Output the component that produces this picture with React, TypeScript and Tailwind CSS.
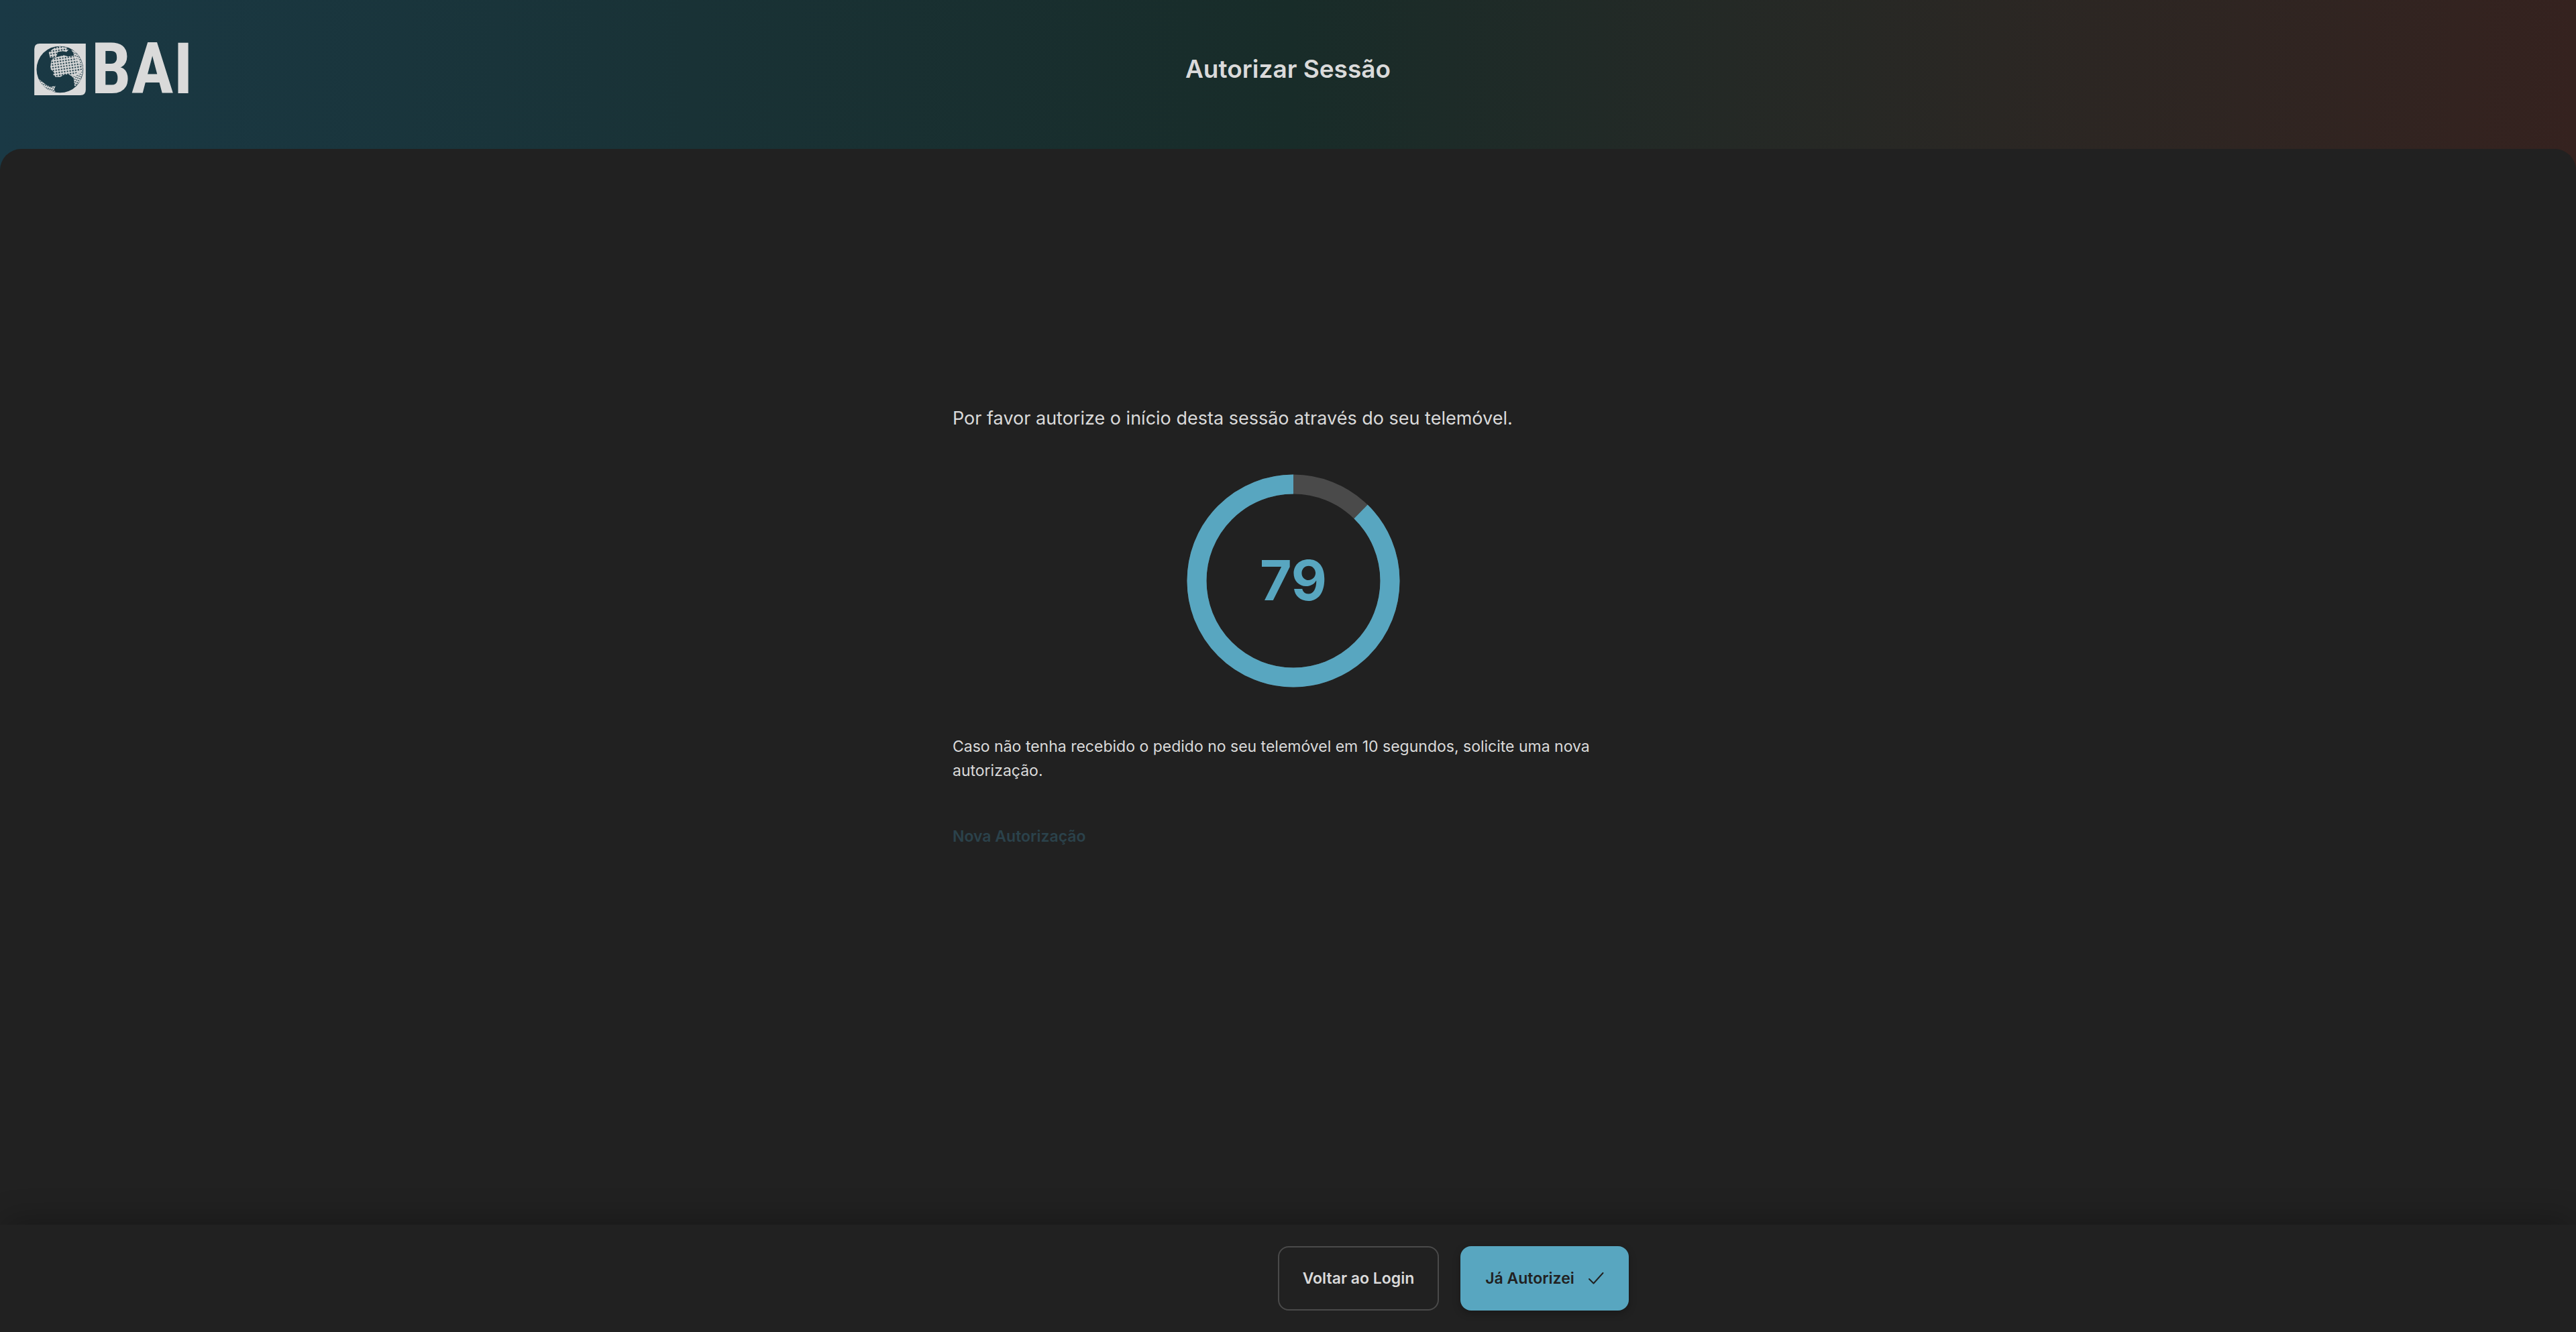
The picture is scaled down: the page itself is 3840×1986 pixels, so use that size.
const SECONDS_LEFT = 79;
const RADIUS = 144;
const CIRCUMFERENCE = 2 * Math.PI * RADIUS;
const ELAPSED = 0.123;

function BaiLogo() {
  return (
    <div className="flex h-[78px] items-center gap-2 text-[#dadada]">
      <svg viewBox="63 46 231 232" className="size-[77px]" aria-hidden="true">
        <defs>
          <pattern id="mesh" width="12.4" height="12.4" patternUnits="userSpaceOnUse" patternTransform="rotate(-8)">
            <path d="M0 6.2H12.4M6.2 0V12.4" stroke="currentColor" strokeWidth="5.8" />
          </pattern>
          <pattern id="fineMesh" width="9" height="10" patternUnits="userSpaceOnUse" patternTransform="rotate(20) skewX(-12)">
            <path d="M0 5H9M4.5 0V10" stroke="currentColor" strokeWidth="4.4" />
          </pattern>
        </defs>
        <path
          fill="currentColor"
          fillRule="evenodd"
          d="M63 70Q63 46 87 46H294V254Q294 278 270 278H63ZM73 162a105 105 0 1 0 210 0a105 105 0 1 0-210 0Z"
        />
        <path
          fill="url(#mesh)"
          d="M128 86L150 66L178 58L208 64L216 74L208 84L190 80L168 84L162 106L134 110ZM140 116L160 108L196 98L214 104L240 100L262 116L272 140L281 150L279 178L262 182L236 198L218 184L196 186L180 196L158 196L148 186L150 174L134 158Z"
        />
        <path
          fill="url(#fineMesh)"
          d="M228 72L248 84L266 106L278 134L281 152L270 138L258 132L250 112L238 102L240 92ZM236 190L262 170L281 160L279 184L268 216L244 240L240 206ZM84 206L98 216L114 230L136 240L158 236L152 254L160 264L138 260L112 244L96 228Z"
        />
      </svg>
      <span className="font-['Roboto_Condensed',Roboto,sans-serif] text-[106px] leading-[78px] font-bold">BAI</span>
    </div>
  );
}

function Countdown() {
  return (
    <div className="grid place-items-center" role="timer" aria-label="Tempo restante">
      <svg viewBox="0 0 318 318" className="col-start-1 row-start-1 size-[318px] -rotate-90" aria-hidden="true">
        <circle cx="159" cy="159" r={RADIUS} fill="none" stroke="#4a4a4a" strokeWidth="29" />
        <circle
          cx="159"
          cy="159"
          r={RADIUS}
          fill="none"
          stroke="#58a6c0"
          strokeWidth="29"
          strokeDasharray={`${CIRCUMFERENCE * (1 - ELAPSED)} ${CIRCUMFERENCE}`}
          strokeDashoffset={-CIRCUMFERENCE * ELAPSED}
        />
      </svg>
      <span className="col-start-1 row-start-1 text-[82px] leading-none font-bold text-[#58a6c0]">{SECONDS_LEFT}</span>
    </div>
  );
}

export default function App() {
  return (
    <div className="flex min-h-screen flex-col bg-linear-to-r from-[#1a3945] via-[#182c29] to-[#35221f] font-[Inter,sans-serif] text-[#dadada]">
      <header className="grid h-[222px] grid-cols-[1fr_auto_1fr] items-center px-[51px] pb-4">
        <a href="#" aria-label="BAI" className="justify-self-start">
          <BaiLogo />
        </a>
        <h1 className="text-[37px] leading-[48px] font-semibold">Autorizar Sessão</h1>
      </header>

      <main className="flex grow flex-col items-center rounded-t-[32px] bg-[#212121]">
        <section className="mt-[381px] ml-4 flex w-full max-w-[1016px] flex-col items-stretch">
          <p className="text-[27px] leading-[42px]">Por favor autorize o início desta sessão através do seu telemóvel.</p>
          <div className="mt-[62px]">
            <Countdown />
          </div>
          <p className="mt-[70px] text-[23px] leading-[36px]">
            Caso não tenha recebido o pedido no seu telemóvel em 10 segundos, solicite uma nova autorização.
          </p>
          <button type="button" disabled className="mt-[62px] self-start text-[23px] leading-[36px] font-semibold text-[#2b424b]">
            Nova Autorização
          </button>
        </section>
      </main>

      <footer className="flex h-[160px] justify-center bg-[#212121] shadow-[0_-12px_48px_-8px_rgba(0,0,0,0.3)]">
        <div className="flex w-full max-w-[1016px] items-center justify-end gap-8">
          <button type="button" className="h-24 w-[240px] rounded-2xl border-2 border-[#4a4a4a] text-[23px] font-semibold">
            Voltar ao Login
          </button>
          <button
            type="button"
            className="flex h-24 w-[251px] items-center justify-center gap-5 rounded-2xl bg-[#58a6c0] text-[23px] font-semibold text-[#212121] shadow-[0_4px_12px_rgba(0,0,0,0.25)]"
          >
            Já Autorizei
            <svg viewBox="0 0 24 20" className="h-5 w-6" fill="none" stroke="currentColor" strokeWidth="2" strokeLinecap="round" strokeLinejoin="round" aria-hidden="true">
              <path d="M2 11L8.500 17.500L22.500 2" />
            </svg>
          </button>
        </div>
      </footer>
    </div>
  );
}
